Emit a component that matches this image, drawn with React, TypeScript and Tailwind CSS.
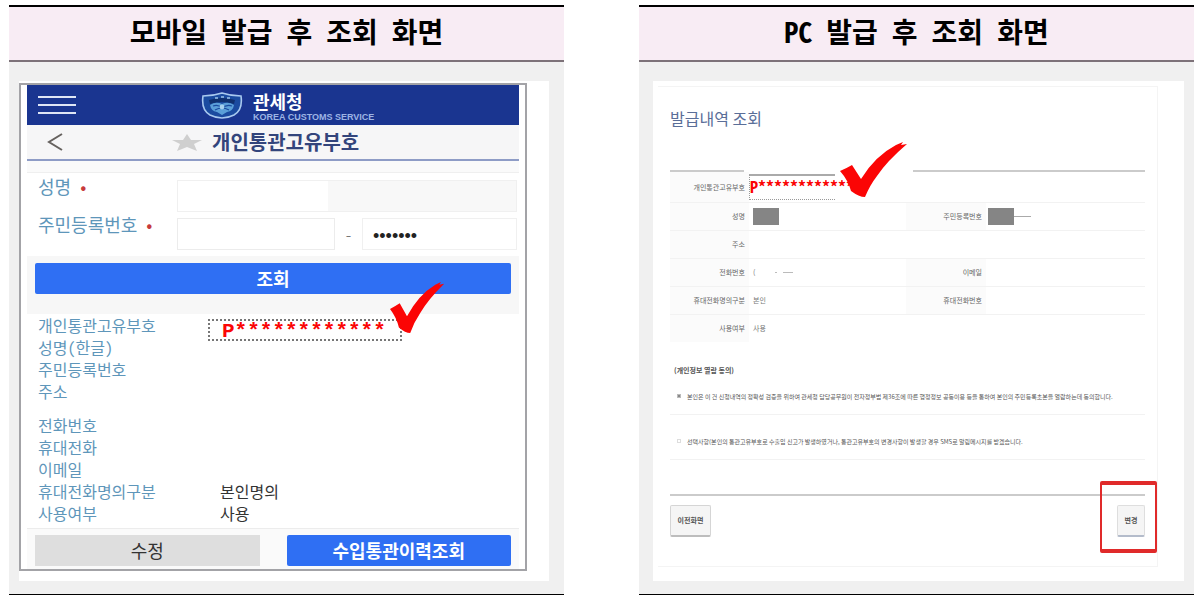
import type { ReactNode } from "react";

const MASKED_CODE = "P************";

interface PanelProps {
  title: string;
  children: ReactNode;
}

function Panel({ title, children }: PanelProps) {
  return (
    <section className="flex flex-col border-t-2 border-b border-black bg-[#f0f0f0]">
      <h2 className="border-b-2 border-[#7d7279] bg-[#f8ecf4] pb-1 text-center font-['Noto_Sans_Mono_CJK_KR','Noto_Sans_CJK_KR',sans-serif] text-[28px] leading-[49px] font-bold text-black">
        {title}
      </h2>
      {children}
    </section>
  );
}

function CheckMark({ className }: { className: string }) {
  return (
    <svg viewBox="0 0 68 56" preserveAspectRatio="none" className={className} aria-hidden="true">
      <path
        d="M0 29 Q7 26 12 23 L21 37 Q35 14 56 3 L63 0 L61 3 L67 2 Q47 19 37 34 Q30 43 25 55 Q19 55 11 49 Q8 38 0 29Z"
        fill="#fb0505"
      />
    </svg>
  );
}

function CustomsShield() {
  return (
    <svg viewBox="0 0 42 27" className="h-[27px] w-[42px]" aria-hidden="true">
      <path
        d="M2 4 Q12 4 21 1 Q30 4 40 4 Q42 18 33 23 Q27 26 21 26 Q15 26 9 23 Q0 18 2 4Z"
        fill="#1b4ba0"
        stroke="#a9c9ef"
        strokeWidth="1.6"
      />
      <path d="M8 8 Q21 4 34 8 L33 12 Q21 8 9 12Z" fill="#10306f" />
      <path d="M14 6 h3 M20 5 h3 M26 6 h3" stroke="#9cc4ea" strokeWidth="1.3" />
      <path d="M9 13 Q15 9 21 12 Q27 9 33 13 Q32 19 26 20 L21 23 L16 20 Q10 19 9 13Z" fill="#5b9fd8" />
      <path d="M12 14 Q17 12 21 16 Q26 12 31 14 M14 18 Q21 14 28 18" stroke="#1b4ba0" strokeWidth="1.2" fill="none" />
      <circle cx="21" cy="15" r="2.4" fill="#a5d0ee" />
    </svg>
  );
}

const mobileRows = [
  [
    { label: "개인통관고유부호", value: MASKED_CODE, masked: true },
    { label: "성명(한글)", value: "" },
    { label: "주민등록번호", value: "" },
    { label: "주소", value: "" },
  ],
  [
    { label: "전화번호", value: "" },
    { label: "휴대전화", value: "" },
    { label: "이메일", value: "" },
    { label: "휴대전화명의구분", value: "본인명의" },
    { label: "사용여부", value: "사용" },
  ],
];

function MobileScreen() {
  return (
    <div className="pt-[19px] pr-[15px] pb-[13px] pl-[10px] font-['Noto_Sans_Mono_CJK_KR','Noto_Sans_CJK_KR',sans-serif]">
      <div className="bg-white pt-0.5 pr-[22px] pb-2.5">
        <div className="border-2 border-[#a3a3a7] px-1.5">
          <header className="flex h-10 items-center bg-[#1a3590] pl-[11px] text-white">
            <button type="button" aria-label="메뉴" className="flex w-[38px] flex-col gap-1.5">
              <span className="h-0.5 bg-[#dfe6f6]" />
              <span className="h-0.5 bg-[#dfe6f6]" />
              <span className="h-0.5 bg-[#dfe6f6]" />
            </button>
            <div className="ml-[125px] flex items-center gap-2.5">
              <CustomsShield />
              <div>
                <p className="text-[18px] leading-6 font-bold">관세청</p>
                <p className="font-['Liberation_Sans',sans-serif] text-[9px] leading-2 font-bold text-[#9db4e4]">
                  KOREA CUSTOMS SERVICE
                </p>
              </div>
            </div>
          </header>

          <div className="flex h-9 items-center border-b-2 border-[#8e9cc6] bg-[#f6f6f7] pl-5">
            <button type="button" aria-label="뒤로">
              <svg viewBox="0 0 16 18" className="h-[18px] w-4" fill="none" stroke="#66625f" strokeWidth="2">
                <path d="M15 1 L2 9 L15 17" />
              </svg>
            </button>
            <svg viewBox="0 0 30 17" className="ml-[109px] h-[17px] w-[30px]" aria-hidden="true">
              <path d="M15 0 L19 6 L30 6 L22 10 L25 17 L15 13 L5 17 L8 10 L0 6 L11 6Z" fill="#cfcfcf" />
            </svg>
            <h3 className="ml-2.5 text-[20px] leading-8 font-bold text-[#33457c]">개인통관고유부호</h3>
          </div>

          <form onSubmit={(e) => e.preventDefault()}>
            <div className="h-3 border-b border-[#efefef] bg-[#fafafa]" />
            <div className="flex flex-col gap-1.5 pt-[7px] pr-0.5 pb-1.5 pl-[11px]">
              <div className="flex items-start">
                <label htmlFor="name" className="w-[139px] text-[18px] leading-3 text-[#5e96ba]">
                  성명 <span className="text-[#c73b3b]">•</span>
                </label>
                <div className="flex h-8 flex-1 border border-[#f0f0f0] bg-[#f8f8f8]">
                  <input id="name" className="w-[150px] bg-white" />
                </div>
              </div>
              <div className="flex items-start">
                <label htmlFor="rrn-front" className="w-[139px] text-[18px] leading-3 text-[#5e96ba]">
                  주민등록번호 <span className="text-[#c73b3b]">•</span>
                </label>
                <input id="rrn-front" className="h-8 w-[158px] min-w-0 border border-[#ececec]" />
                <span className="w-[27px] text-center text-[14px] leading-8 text-[#777]">-</span>
                <input
                  type="password"
                  aria-label="주민등록번호 뒷자리"
                  defaultValue="0000000"
                  className="h-8 min-w-0 flex-1 border border-[#f0f0f0] pt-1 pl-2.5 font-['Liberation_Sans',sans-serif] text-[18px] text-[#222]"
                />
              </div>
            </div>
            <div className="bg-[#f7f7f7] px-2 pt-[7px] pb-5">
              <button type="submit" className="h-[31px] w-full rounded-xs bg-[#2f6ff3] text-[18px] leading-[31px] font-bold text-white">
                조회
              </button>
            </div>
          </form>

          <div className="relative flex flex-col gap-3 pb-1 pl-[11px]">
            {mobileRows.map((group) => (
              <dl key={group[0].label}>
                {group.map((row) => (
                  <div key={row.label} className="flex h-[22px] text-[16px] leading-[22px]">
                    <dt className="w-[170px] text-[#5e96ba]">{row.label}</dt>
                    {row.masked ? (
                      <dd className="mt-[5px] h-[22px] w-[194px] border-2 border-dotted border-[#777] pl-3 font-['Liberation_Mono',monospace] text-[21px] leading-[22px] font-bold text-[#fb0505]">
                        {row.value}
                      </dd>
                    ) : (
                      <dd className="pl-3 text-[#333]">{row.value}</dd>
                    )}
                  </div>
                ))}
              </dl>
            ))}
            <CheckMark className="absolute -top-8 left-[363px] h-[52px] w-[55px]" />
          </div>

          <div className="flex gap-[27px] border-t border-[#ececec] bg-[#fafafa] px-2 pt-1.5 pb-[3px]">
            <button type="button" className="h-[31px] flex-1 bg-[#dedede] text-[18px] leading-[31px] text-[#333]">
              수정
            </button>
            <button type="button" className="h-[31px] flex-1 rounded-xs bg-[#2f6ff3] text-[18px] leading-[31px] font-bold text-white">
              수입통관이력조회
            </button>
          </div>
        </div>
      </div>
    </div>
  );
}

const thClass = "bg-[#fbfbfb] pr-1 text-right font-normal text-[#666]";
const tdClass = "pl-1 text-left text-[#777]";

function PcScreen() {
  return (
    <div className="pt-[19px] pr-[10px] pb-[13px] pl-[14px] font-['Noto_Sans_CJK_KR',sans-serif]">
      <div className="bg-white pt-[5px] pr-[26px] pb-3.5 pl-[5px]">
        <div className="border-t border-r border-b border-[#f4f4f4] pt-[19px] pr-3 pb-[29px] pl-3">
          <h3 className="text-[16px] leading-6 text-[#5a6e98]">발급내역 조회</h3>

          <div className="relative mt-10">
            <div className="flex justify-between">
              <div className="h-0.5 w-[74px] bg-[#cbcbcb]" />
              <div className="h-0.5 w-[232px] bg-[#cbcbcb]" />
            </div>
            <table className="w-full table-fixed border-collapse text-[7px] leading-3">
              <colgroup>
                <col className="w-[79px]" />
                <col className="w-[157px]" />
                <col className="w-[80px]" />
                <col />
              </colgroup>
              <tbody>
                <tr className="h-[30px] border-b border-[#f2f2f2]">
                  <th scope="row" className={thClass}>개인통관고유부호</th>
                  <td colSpan={3} className="p-0">
                    <div className="h-[26px] w-[86px] border-t-2 border-b border-l border-t-[#aaa] border-b-[#999] border-l-[#999] font-['Noto_Sans_Mono_CJK_KR',monospace] text-[16px] leading-5 font-bold whitespace-nowrap text-[#fb0505] [border-bottom-style:dotted] [border-left-style:dotted]">
                      {MASKED_CODE}
                    </div>
                  </td>
                </tr>
                <tr className="h-7 border-b border-[#f2f2f2]">
                  <th scope="row" className={thClass}>성명</th>
                  <td className={tdClass}>
                    <div className="h-[17px] w-[26px] bg-[#858585]" />
                  </td>
                  <th scope="row" className={thClass}>주민등록번호</th>
                  <td className="pl-0.5">
                    <div className="flex items-center">
                      <div className="h-[17px] w-[26px] bg-[#858585]" />
                      <div className="h-px w-[17px] bg-[#aaa]" />
                    </div>
                  </td>
                </tr>
                <tr className="h-7 border-b border-[#f2f2f2]">
                  <th scope="row" className={thClass}>주소</th>
                  <td colSpan={3} className={tdClass} />
                </tr>
                <tr className="h-7 border-b border-[#f2f2f2]">
                  <th scope="row" className={thClass}>전화번호</th>
                  <td className={tdClass}>
                    <div className="flex items-center">
                      <span>(</span>
                      <div className="ml-5 h-px w-0.5 bg-[#bbb]" />
                      <div className="ml-1.5 h-px w-2.5 bg-[#bbb]" />
                    </div>
                  </td>
                  <th scope="row" className={thClass}>이메일</th>
                  <td className={tdClass} />
                </tr>
                <tr className="h-7 border-b border-[#f2f2f2]">
                  <th scope="row" className={thClass}>휴대전화명의구분</th>
                  <td className={tdClass}>본인</td>
                  <th scope="row" className={thClass}>휴대전화번호</th>
                  <td className={tdClass} />
                </tr>
                <tr className="h-7">
                  <th scope="row" className={thClass}>사용여부</th>
                  <td className={tdClass}>사용</td>
                  <td colSpan={2} />
                </tr>
              </tbody>
            </table>
            <CheckMark className="absolute -top-7 left-[170px] h-14 w-[68px]" />
          </div>

          <h4 className="mt-5 pl-1 text-[7px] leading-4 font-bold text-[#555]">(개인정보 열람 동의)</h4>
          <label className="flex h-[37px] items-center gap-1.5 border-b border-[#f2f2f2] pl-[7px] text-[6px] whitespace-nowrap text-[#555]">
            <input type="checkbox" defaultChecked className="size-1 appearance-none border border-[#bbb] checked:bg-[#888]" />
            본인은 이 건 신청내역의 정확성 검증을 위하여 관세청 담당공무원이 전자정부법 제36조에 따른 행정정보 공동이용 등을 통하여 본인의 주민등록초본을 열람하는데 동의합니다.
          </label>
          <label className="flex h-[45px] items-center gap-1.5 border-b border-[#f2f2f2] pt-2 pl-[7px] text-[6px] whitespace-nowrap text-[#555]">
            <input type="checkbox" className="size-1 appearance-none border border-[#ddd] checked:bg-[#888]" />
            선택사항(본인의 통관고유부호로 수출입 신고가 발생하였거나, 통관고유부호의 변경사항이 발생할 경우 SMS로 알림메시지를 받겠습니다.
          </label>

          <div className="mt-[34px] h-0.5 bg-[#cbcbcb]" />
          <div className="mt-[9px] flex justify-between text-[7px] font-bold text-[#555]">
            <button type="button" className="h-8 w-[41px] rounded-xs border border-b-2 border-[#d5d5d5] border-b-[#bdbdbd] bg-[#f5f5f5]">
              이전화면
            </button>
            <div className="relative">
              <button type="button" className="h-8 w-7 rounded-xs border border-b-2 border-[#dedede] border-b-[#b4bccb] bg-[#f5f5f5]">
                변경
              </button>
              <div className="pointer-events-none absolute -top-6 -right-3 h-[72px] w-[57px] rounded-xs border-x-2 border-y-4 border-[#e02a2a]" />
            </div>
          </div>
        </div>
      </div>
    </div>
  );
}

export default function App() {
  return (
    <main className="grid grid-cols-2 gap-[75px] bg-white px-[9px] pt-[5px]">
      <Panel title="모바일 발급 후 조회 화면">
        <MobileScreen />
      </Panel>
      <Panel title="PC 발급 후 조회 화면">
        <PcScreen />
      </Panel>
    </main>
  );
}
